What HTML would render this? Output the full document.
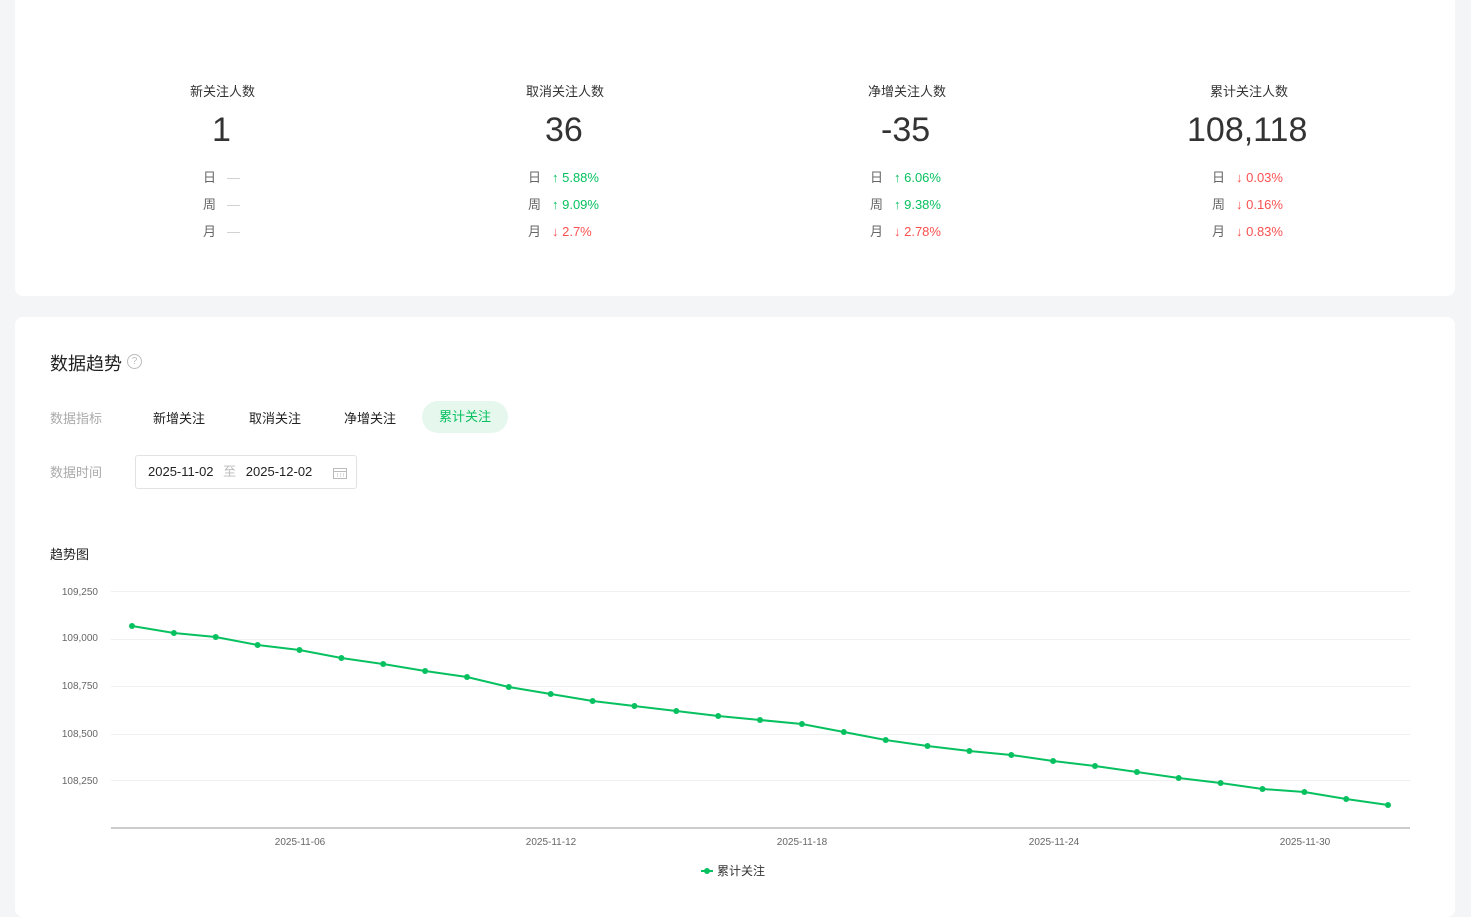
<!DOCTYPE html>
<html><head><meta charset="utf-8"><style>
*{margin:0;padding:0;box-sizing:border-box}
body{width:1471px;height:901px;background:#f4f5f7;font-family:"Liberation Sans","Noto Sans CJK SC",sans-serif;overflow:hidden;position:relative;color:#333}
.card{position:absolute;left:15px;width:1440px;background:#fff;border-radius:8px}
.row{position:absolute;font-size:13px;white-space:nowrap}
.row .l{color:#666;display:inline-block;width:24px}
.up{color:#07c160}.dn{color:#fa5151}.na{color:#ccc}
.abs{position:absolute;white-space:nowrap}
.num{font-size:34px;top:111px;color:#333}
</style></head><body>
<div class="card" style="top:-10px;height:306px"></div>
<div class="card" style="top:317px;height:600px"></div>

<div class="abs" style="left:190px;top:81px;font-size:13px">新关注人数</div>
<div class="abs num" style="left:212px">1</div>
<div class="abs" style="left:526px;top:81px;font-size:13px">取消关注人数</div>
<div class="abs num" style="left:545px">36</div>
<div class="abs" style="left:868px;top:81px;font-size:13px">净增关注人数</div>
<div class="abs num" style="left:881px">-35</div>
<div class="abs" style="left:1210px;top:81px;font-size:13px">累计关注人数</div>
<div class="abs num" style="left:1187px">108,118</div>

<div class="row" style="left:203px;top:167px"><span class="l">日</span><span class="na">—</span></div>
<div class="row" style="left:203px;top:194px"><span class="l">周</span><span class="na">—</span></div>
<div class="row" style="left:203px;top:221px"><span class="l">月</span><span class="na">—</span></div>

<div class="row" style="left:528px;top:167px"><span class="l">日</span><span class="up">↑ 5.88%</span></div>
<div class="row" style="left:528px;top:194px"><span class="l">周</span><span class="up">↑ 9.09%</span></div>
<div class="row" style="left:528px;top:221px"><span class="l">月</span><span class="dn">↓ 2.7%</span></div>

<div class="row" style="left:870px;top:167px"><span class="l">日</span><span class="up">↑ 6.06%</span></div>
<div class="row" style="left:870px;top:194px"><span class="l">周</span><span class="up">↑ 9.38%</span></div>
<div class="row" style="left:870px;top:221px"><span class="l">月</span><span class="dn">↓ 2.78%</span></div>

<div class="row" style="left:1212px;top:167px"><span class="l">日</span><span class="dn">↓ 0.03%</span></div>
<div class="row" style="left:1212px;top:194px"><span class="l">周</span><span class="dn">↓ 0.16%</span></div>
<div class="row" style="left:1212px;top:221px"><span class="l">月</span><span class="dn">↓ 0.83%</span></div>

<div class="abs" style="left:50px;top:350px;font-size:18px;color:#222">数据趋势</div>
<div class="abs" style="left:127px;top:354px;width:15px;height:15px;border:1px solid #bbb;border-radius:50%;font-size:10px;color:#bbb;text-align:center;line-height:13px">?</div>

<div class="abs" style="left:50px;top:408px;font-size:13px;color:#aaa">数据指标</div>
<div class="abs" style="left:153px;top:408px;font-size:13px;color:#222">新增关注</div>
<div class="abs" style="left:249px;top:408px;font-size:13px;color:#222">取消关注</div>
<div class="abs" style="left:344px;top:408px;font-size:13px;color:#222">净增关注</div>
<div class="abs" style="left:422px;top:401px;width:86px;height:32px;border-radius:16px;background:#e6f8ed;color:#07c160;font-size:13px;text-align:center;line-height:32px">累计关注</div>

<div class="abs" style="left:50px;top:462px;font-size:13px;color:#aaa">数据时间</div>
<div class="abs" style="left:135px;top:455px;width:222px;height:34px;border:1px solid #e2e2e2;border-radius:3px;font-size:13px;line-height:32px;padding-left:12px;color:#222">2025-11-02 <span style="color:#bbb;margin:0 6px">至</span> 2025-12-02
<svg style="position:absolute;left:197px;top:11px" width="14" height="12" viewBox="0 0 14 12"><rect x="0.5" y="1.5" width="13" height="10" fill="none" stroke="#bbb"/><line x1="0.5" y1="4.5" x2="13.5" y2="4.5" stroke="#bbb"/><path d="M4 7h1M7 7h1M10 7h1M4 9h1M7 9h1M10 9h1" stroke="#bbb"/></svg></div>

<div class="abs" style="left:50px;top:544px;font-size:13px;color:#222">趋势图</div>

<svg class="abs" style="left:0;top:0" width="1471" height="901">
<g stroke="#f0f0f0" stroke-width="1">
<line x1="111" y1="591.5" x2="1410" y2="591.5"/>
<line x1="111" y1="639.5" x2="1410" y2="639.5"/>
<line x1="111" y1="686.5" x2="1410" y2="686.5"/>
<line x1="111" y1="734.5" x2="1410" y2="734.5"/>
<line x1="111" y1="780.5" x2="1410" y2="780.5"/>
</g>
<line x1="111" y1="828" x2="1410" y2="828" stroke="#ccc" stroke-width="2"/>
<g font-size="10" fill="#666" font-family="Liberation Sans" text-anchor="end">
<text x="98" y="595">109,250</text><text x="98" y="641">109,000</text><text x="98" y="689">108,750</text><text x="98" y="737">108,500</text><text x="98" y="784">108,250</text>
</g>
<g font-size="10" fill="#666" font-family="Liberation Sans" text-anchor="middle">
<text x="300" y="845">2025-11-06</text><text x="551" y="845">2025-11-12</text><text x="802" y="845">2025-11-18</text><text x="1054" y="845">2025-11-24</text><text x="1305" y="845">2025-11-30</text>
</g>
<polyline fill="none" stroke="#07c160" stroke-width="2" points="132,626 173.9,633 215.7,637 257.6,645 299.5,650 341.4,658 383.2,664 425.1,671 467,677 508.8,687 550.7,694 592.6,701 634.4,706 676.3,711 718.2,716 760,720 801.9,724 843.8,732 885.7,740 927.5,746 969.4,751 1011.3,755 1053.1,761 1095,766 1136.9,772 1178.7,778 1220.6,783 1262.5,789 1304.4,792 1346.2,799 1388,805"/>
<g fill="#07c160">
<circle cx="132" cy="626" r="3"/><circle cx="173.9" cy="633" r="3"/><circle cx="215.7" cy="637" r="3"/><circle cx="257.6" cy="645" r="3"/><circle cx="299.5" cy="650" r="3"/><circle cx="341.4" cy="658" r="3"/><circle cx="383.2" cy="664" r="3"/><circle cx="425.1" cy="671" r="3"/><circle cx="467" cy="677" r="3"/><circle cx="508.8" cy="687" r="3"/><circle cx="550.7" cy="694" r="3"/><circle cx="592.6" cy="701" r="3"/><circle cx="634.4" cy="706" r="3"/><circle cx="676.3" cy="711" r="3"/><circle cx="718.2" cy="716" r="3"/><circle cx="760" cy="720" r="3"/><circle cx="801.9" cy="724" r="3"/><circle cx="843.8" cy="732" r="3"/><circle cx="885.7" cy="740" r="3"/><circle cx="927.5" cy="746" r="3"/><circle cx="969.4" cy="751" r="3"/><circle cx="1011.3" cy="755" r="3"/><circle cx="1053.1" cy="761" r="3"/><circle cx="1095" cy="766" r="3"/><circle cx="1136.9" cy="772" r="3"/><circle cx="1178.7" cy="778" r="3"/><circle cx="1220.6" cy="783" r="3"/><circle cx="1262.5" cy="789" r="3"/><circle cx="1304.4" cy="792" r="3"/><circle cx="1346.2" cy="799" r="3"/><circle cx="1388" cy="805" r="3"/>
</g>
<line x1="701" y1="871" x2="713" y2="871" stroke="#07c160" stroke-width="2"/>
<circle cx="707" cy="871" r="3" fill="#07c160"/>
<text x="717" y="875" font-size="12" fill="#333" font-family="Liberation Sans, Noto Sans CJK SC">累计关注</text>
</svg>
</body></html>
